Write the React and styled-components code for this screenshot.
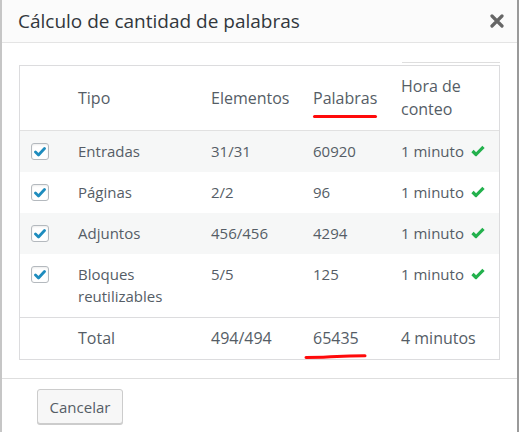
import React from 'react'
import styled, { createGlobalStyle } from 'styled-components'

const GlobalStyle = createGlobalStyle`
  html, body {
    margin: 0;
    padding: 0;
    background: #fff;
  }
  body {
    font-family: 'Open Sans', 'Noto Sans', sans-serif;
  }
`

const Frame = styled.div`
  width: 519px;
  height: 432px;
  box-sizing: border-box;
  border-left: 2px solid #c6c6c6;
  border-right: 2px solid #9a9a9a;
  background: #fff;
  display: flex;
  flex-direction: column;
  overflow: hidden;
`

const Header = styled.div`
  height: 42px;
  flex-shrink: 0;
  display: flex;
  align-items: center;
  justify-content: space-between;
  padding: 0 13px 0 16px;
  background: #fbfbfb;
  border-bottom: 1px solid #e4e4e4;
`

const Title = styled.h1`
  margin: 0;
  font-size: 19px;
  font-weight: 400;
  color: #32373c;
  line-height: 24px;
`

const CloseButton = styled.button`
  border: 0;
  background: none;
  padding: 0;
  width: 14px;
  height: 14px;
  display: flex;
  cursor: pointer;
`

const Body = styled.div`
  padding: 19px 17px 18px 17px;
  border-bottom: 1px solid #dedede;
`

const SearchEdge = styled.div`
  width: 98px;
  height: 1px;
  margin: 0 0 2px auto;
  background: #dedede;
`

const Table = styled.div`
  border: 1px solid #dcdcde;
  color: #555d66;
`

const Row = styled.div`
  display: grid;
  grid-template-columns: 48px 133px 102px 88px 1fr;
  background: ${(p) => (p.$shaded ? '#f6f7f7' : '#fff')};
  align-items: ${(p) => (p.$head ? 'center' : 'start')};
  min-height: ${(p) => (p.$head ? '64px' : 'auto')};
  border-bottom: ${(p) => (p.$head ? '1px solid #e1e1e1' : 'none')};
  border-top: ${(p) => (p.$total ? '1px solid #dcdcde' : 'none')};
  font-size: ${(p) => (p.$head || p.$total ? '16px' : '15px')};
  line-height: ${(p) => (p.$head ? '23px' : '22px')};
`

const Cell = styled.div`
  padding: ${(p) => (p.$head ? '0 10px' : '9px 10px 10px')};
  display: flex;
  align-items: center;
`

const CheckCell = styled.div`
  padding: 12px 0 0 11px;
  display: flex;
`

const Box = styled.span`
  width: 18px;
  height: 17px;
  box-sizing: border-box;
  border: 1px solid #b4b9be;
  border-radius: 3px;
  background: #fff;
  box-shadow: inset 0 1px 2px rgba(0, 0, 0, 0.08);
  display: flex;
  align-items: center;
  justify-content: center;
`

const Marked = styled.span`
  position: relative;
  display: inline-block;
  &::after {
    content: '';
    position: absolute;
    left: 0;
    right: 0;
    bottom: -8px;
    height: 3px;
    border-radius: 2px;
    background: #ff0a0a;
  }
`

const Scribbled = styled.span`
  position: relative;
  display: inline-block;
`

const Scribble = styled.svg`
  position: absolute;
  left: -8px;
  top: calc(100% + 5px);
  overflow: visible;
`

const Done = styled.svg`
  margin-left: 7px;
  flex-shrink: 0;
`

const Footer = styled.div`
  padding: 10px 35px;
`

const Button = styled.button`
  width: 86px;
  height: 35px;
  border: 1px solid #cccccc;
  border-radius: 3px;
  background: #f7f7f7;
  box-shadow: 0 1px 0 #cccccc;
  font-family: 'Open Sans', 'Noto Sans', sans-serif;
  font-size: 15px;
  color: #555d66;
  cursor: pointer;
`

const Checkbox = () => (
  <Box>
    <svg width="12" height="10" viewBox="0 0 12 10">
      <path d="M1.5 5 L4.5 8 L10.5 1.5" fill="none" stroke="#1e8cbe" strokeWidth="2.8" strokeLinecap="round" strokeLinejoin="round" />
    </svg>
  </Box>
)

const GreenCheck = () => (
  <Done width="14" height="12" viewBox="0 0 14 12">
    <path d="M1.5 6 L5 9.5 L12.5 1.8" fill="none" stroke="#23b14d" strokeWidth="3.2" strokeLinejoin="round" />
  </Done>
)

const rows = [
  { tipo: 'Entradas', elementos: '31/31', palabras: '60920' },
  { tipo: 'Páginas', elementos: '2/2', palabras: '96' },
  { tipo: 'Adjuntos', elementos: '456/456', palabras: '4294' },
  { tipo: <>Bloques<br />reutilizables</>, elementos: '5/5', palabras: '125' },
]

export default function App() {
  return (
    <>
      <GlobalStyle />
      <Frame>
        <Header>
          <Title>Cálculo de cantidad de palabras</Title>
          <CloseButton aria-label="Cerrar">
            <svg width="14" height="14" viewBox="0 0 14 14">
              <path d="M2 2 L12 12 M12 2 L2 12" stroke="#666" strokeWidth="3.2" strokeLinecap="round" />
            </svg>
          </CloseButton>
        </Header>
        <Body>
          <SearchEdge />
          <Table>
            <Row $head>
              <span />
              <Cell $head>Tipo</Cell>
              <Cell $head>Elementos</Cell>
              <Cell $head><Marked>Palabras</Marked></Cell>
              <Cell $head>Hora de<br />conteo</Cell>
            </Row>
            {rows.map((r, i) => (
              <Row key={i} $shaded={i % 2 === 0}>
                <CheckCell><Checkbox /></CheckCell>
                <Cell>{r.tipo}</Cell>
                <Cell>{r.elementos}</Cell>
                <Cell>{r.palabras}</Cell>
                <Cell>1 minuto<GreenCheck /></Cell>
              </Row>
            ))}
            <Row $total>
              <span />
              <Cell>Total</Cell>
              <Cell>494/494</Cell>
              <Cell>
                <Scribbled>
                  65435
                  <Scribble width="62" height="5" viewBox="0 0 62 5">
                    <path d="M1 3.6 Q20 3.4 32 2.6 T60 1.8" fill="none" stroke="#ff0a0a" strokeWidth="3" strokeLinecap="round" />
                  </Scribble>
                </Scribbled>
              </Cell>
              <Cell>4 minutos</Cell>
            </Row>
          </Table>
        </Body>
        <Footer>
          <Button>Cancelar</Button>
        </Footer>
      </Frame>
    </>
  )
}
